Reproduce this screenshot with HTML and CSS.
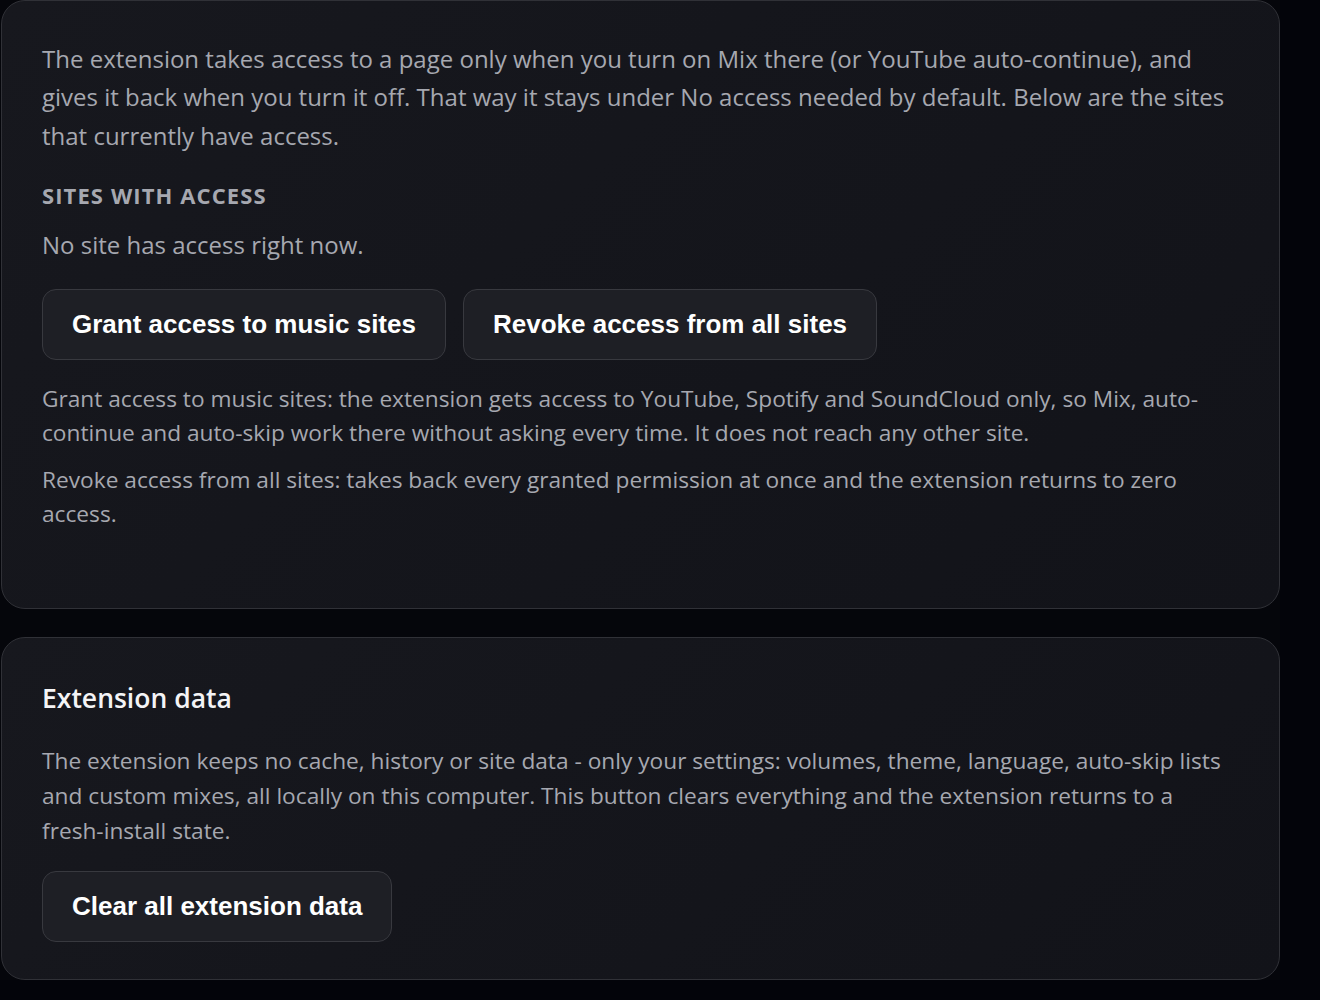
FILE: index.html
```html
<!DOCTYPE html>
<html lang="en">
<head>
    <meta charset="UTF-8">
    <meta name="viewport" content="width=device-width, initial-scale=1.0">
    <title>Privacy &amp; data</title>
    <link rel="stylesheet" href="styles.css">
</head>
<body>

    <div class="page">

        <!-- Site access -->
        <section class="card card-access">
            <p class="lead">The extension takes access to a page only when you turn on Mix there (or YouTube auto-continue), and gives it back when you turn it off. That way it stays under No access needed by default. Below are the sites that currently have access.</p>

            <h3 class="label">Sites with access</h3>
            <p class="lead empty">No site has access right now.</p>

            <div class="buttons">
                <button class="button">Grant access to music sites</button>
                <button class="button">Revoke access from all sites</button>
            </div>

            <p class="hint">Grant access to music sites: the extension gets access to YouTube, Spotify and SoundCloud only, so Mix, auto-continue and auto-skip work there without asking every time. It does not reach any other site.</p>
            <p class="hint">Revoke access from all sites: takes back every granted permission at once and the extension returns to zero access.</p>
        </section>

        <!-- Extension data -->
        <section class="card card-data">
            <h2 class="title">Extension data</h2>
            <p class="text">The extension keeps no cache, history or site data - only your settings: volumes, theme, language, auto-skip lists and custom mixes, all locally on this computer. This button clears everything and the extension returns to a fresh-install state.</p>
            <div class="buttons">
                <button class="button">Clear all extension data</button>
            </div>
        </section>

    </div>

</body>
</html>
```

FILE: styles.css
```css
body {
    margin: 0;
    padding: 0;
    background: #03040a;
    font-family: "Open Sans", "Noto Sans", sans-serif;
    color: #a6a8b0;
}
.page {
    width: 1280px;
    padding: 0 0 0 1px;
    box-sizing: border-box;
    display: flex;
    flex-direction: column;
    gap: 28px;
    background: #05060b;
}
.card {
    background: linear-gradient(135deg, #17181e 0%, #121319 100%);
    border: 1px solid #303137;
    border-radius: 24px;
    padding: 39px 40px;
}
.card-access {
    padding-bottom: 77px;
}
.card-data {
    padding-bottom: 37px;
}
.lead {
    font-size: 24px;
    line-height: 1.6;
    margin: 0;
}
.label {
    font-size: 22px;
    line-height: 28px;
    font-weight: 700;
    text-transform: uppercase;
    letter-spacing: 1.1px;
    color: #a6a8b0;
    margin: 26px 0 17px;
}
.empty {
    margin-bottom: 24px;
}
.buttons {
    display: flex;
    gap: 17px;
}
.button {
    font-family: "Liberation Sans", Arial, sans-serif;
    font-size: 26px;
    font-weight: bold;
    color: #ffffff;
    background: #1e1f25;
    border: 1px solid #38393f;
    border-radius: 14px;
    padding: 19px 29px;
    cursor: pointer;
}
.button:hover {
    background: #26272e;
}
.hint {
    font-size: 22.7px;
    line-height: 34px;
    margin: 22px 0 0;
}
.hint + .hint {
    margin-top: 13px;
}
.title {
    font-size: 26.5px;
    line-height: 42px;
    font-weight: 600;
    color: #f4f4f6;
    margin: 0 0 24px;
}
.text {
    font-size: 22.7px;
    line-height: 35px;
    margin: 0 0 23px;
}
```
